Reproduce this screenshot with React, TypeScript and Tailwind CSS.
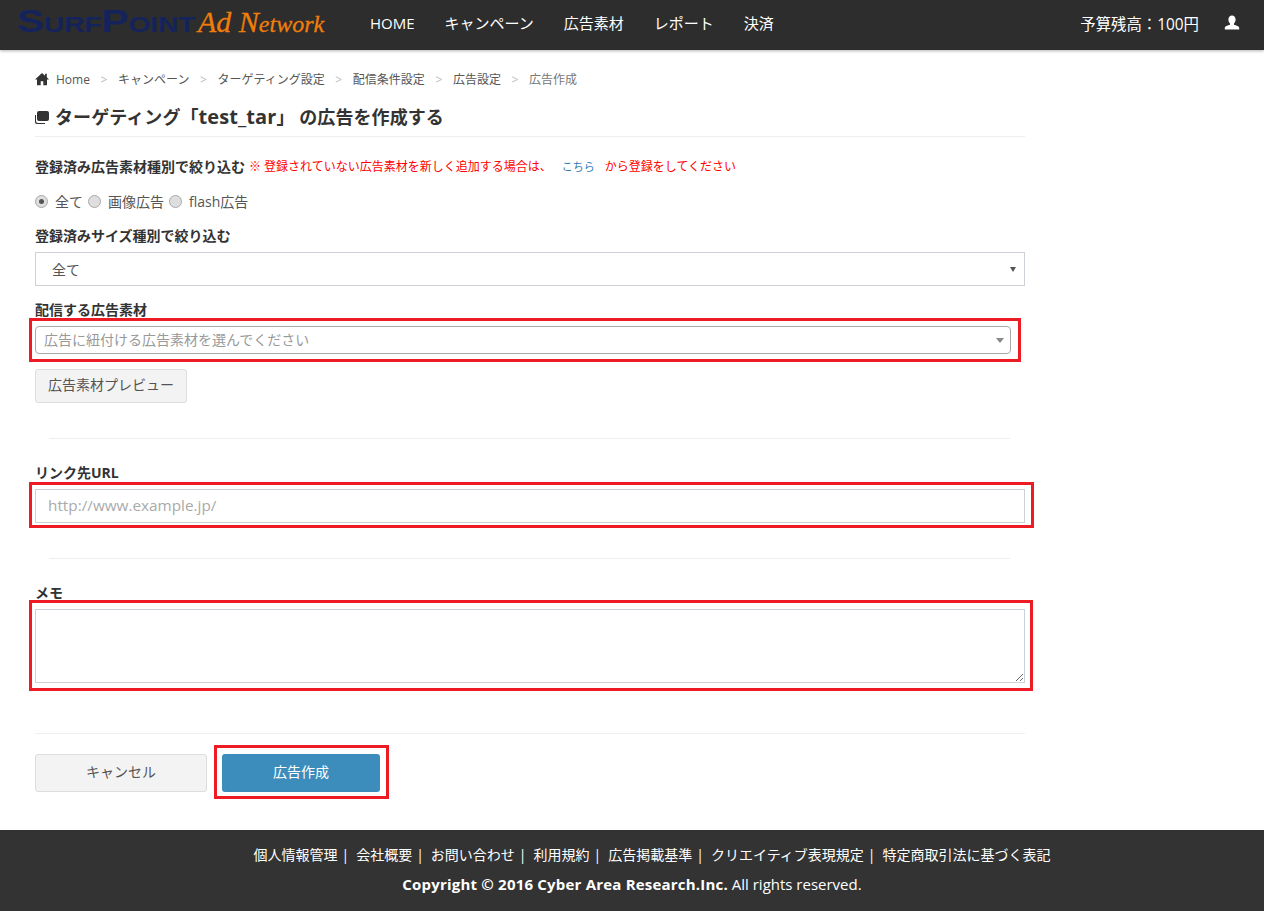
import { Fragment } from "react";

const navItems = ["HOME", "キャンペーン", "広告素材", "レポート", "決済"];
const crumbs = ["キャンペーン", "ターゲティング設定", "配信条件設定", "広告設定"];
const footerLinks = [
  "個人情報管理",
  "会社概要",
  "お問い合わせ",
  "利用規約",
  "広告掲載基準",
  "クリエイティブ表現規定",
];

function Radio({ checked, label }: { checked?: boolean; label: string }) {
  return (
    <label className="flex items-center">
      <span className="flex size-[13px] items-center justify-center rounded-full border border-[#a9a9a9] bg-[#dedede]">
        {checked && <span className="size-[5px] rounded-full bg-[#555]" />}
      </span>
      <span className="ml-[7px] mr-[5px] text-[14px] text-[#555]">{label}</span>
    </label>
  );
}

function Header() {
  return (
    <header className="flex h-[50px] items-center bg-[#2d2d2d] shadow-[0_1px_3px_rgba(0,0,0,0.3)]">
      <div className="ml-[17px] flex w-[353px] items-baseline whitespace-nowrap pb-[8px]">
        <span className="w-[181px] origin-left scale-x-[1.27] font-['Liberation_Sans',sans-serif] text-[32px] font-bold leading-none text-[#14235c] [font-variant:small-caps]">
          SurfPoint
        </span>
        <span className="font-['Liberation_Serif',serif] text-[30px] italic leading-none text-[#f07d0a] [-webkit-text-stroke:0.3px_#f07d0a]">
          Ad N<span className="text-[24px]">etwork</span>
        </span>
      </div>
      <nav className="flex gap-[30px] pb-1 text-[15px] text-white">
        {navItems.map((item) => (
          <a key={item}>{item}</a>
        ))}
      </nav>
      <div className="ml-auto flex items-center">
        <span className="text-[15.4px] text-white">予算残高：100円</span>
        <svg viewBox="0 0 16 16" className="mb-1 ml-[25px] mr-[24px] size-4 fill-white">
          <path d="M8 0.5c2.3 0 3.6 1.8 3.6 4 0 1.6-.7 3.2-1.6 4v1.3c1.8.6 5.2 1.4 5.2 3.2v1.5H.8V13c0-1.8 3.4-2.6 5.2-3.2V8.500C5.100 7.700 4.400 6.100 4.400 4.500c0-2.200 1.300-4 3.600-4z" />
        </svg>
      </div>
    </header>
  );
}

function Breadcrumb() {
  return (
    <div className="flex h-[20px] items-center text-[12px] text-[#555]">
      <svg viewBox="0 0 16 16" className="mb-[2px] mr-[7px] size-[14px] fill-[#333]">
        <path d="M8 1 0 8.500h2.300V15h4.200v-4.500h3V15h4.200V8.500H16l-2.500-2.400V2h-2v2.200z" />
      </svg>
      <span>Home</span>
      {crumbs.map((c) => (
        <Fragment key={c}>
          <span className="mx-[10.6px] text-[#bbb]">&gt;</span>
          <span>{c}</span>
        </Fragment>
      ))}
      <span className="mx-[10.6px] text-[#bbb]">&gt;</span>
      <span className="text-[#777]">広告作成</span>
    </div>
  );
}

function FieldLabel({ children }: { children: string }) {
  return <p className="text-[14px] font-bold leading-[18px] text-[#333]">{children}</p>;
}

export default function App() {
  return (
    <div className="min-h-[911px] bg-white font-['Open_Sans','Noto_Sans_CJK_JP',sans-serif] text-[#333]">
      <Header />
      <main className="ml-[35px] w-[990px] pt-5">
        <Breadcrumb />
        <h1 className="mt-[12px] flex h-[30px] items-center text-[18px] font-bold tracking-[0.08px] text-[#333]">
          <svg viewBox="0 0 14 14" className="mr-[6px] size-[14px] fill-[#333]">
            <path d="M4 1h8a2 2 0 0 1 2 2v6a2 2 0 0 1-2 2H4a2 2 0 0 1-2-2V3a2 2 0 0 1 2-2z" />
            <path d="M0 5h1v6a2 2 0 0 0 2 2h7v1H2a2 2 0 0 1-2-2z" />
          </svg>
          <span>
            ターゲティング「<span className="text-[20px]">test_tar</span>」 の広告を作成する
          </span>
        </h1>
        <hr className="mt-[4px] border-[#eee]" />

        <div className="mt-[19px] flex h-[20px] items-center">
          <span className="mr-[4px] text-[14px] font-bold text-[#333]">登録済み広告素材種別で絞り込む</span>
          <div className="mt-[2px] flex items-center text-[12px] text-[#f00]">
            <span>※ 登録されていない広告素材を新しく追加する場合は、</span>
            <a className="mx-[10px] text-[11px] text-[#337ab7]">こちら</a>
            <span>から登録をしてください</span>
          </div>
        </div>

        <div className="mt-[15px] flex h-[20px] items-center">
          <Radio checked label="全て" />
          <Radio label="画像広告" />
          <Radio label="flash広告" />
        </div>

        <div className="mt-[16px]">
          <FieldLabel>登録済みサイズ種別で絞り込む</FieldLabel>
        </div>
        <div className="mt-[7px] flex h-[34px] items-center justify-between border border-[#ccd0d7] pl-4 pr-[8px] text-[14px] text-[#555]">
          全て
          <span className="h-0 w-0 border-x-[3px] border-t-[5px] border-x-transparent border-t-[#555]" />
        </div>

        <div className="mt-[15px]">
          <FieldLabel>配信する広告素材</FieldLabel>
        </div>
        <div className="-ml-[6px] -mt-[1px] w-[992px] border-[3px] border-[#ed1c24] py-[5px] pl-[3px] pr-[7px]">
          <div className="flex h-[28px] items-center justify-between rounded-[4px] border border-[#aaa] pl-[8px] pr-[6px] text-[14px] text-[#999]">
            <span className="mb-[2px]">広告に紐付ける広告素材を選んでください</span>
            <span className="h-0 w-0 border-x-[4px] border-t-[5px] border-x-transparent border-t-[#888]" />
          </div>
        </div>
        <button className="mt-[7px] block h-[34px] w-[152px] rounded-[3px] border border-[#ddd] bg-[#f3f3f3] pb-[3px] text-[14px] text-[#555]">
          広告素材プレビュー
        </button>

        <hr className="ml-[14px] mt-[35px] w-[961px] border-[#eee]" />

        <div className="mt-[25px]">
          <FieldLabel>リンク先URL</FieldLabel>
        </div>
        <div className="-ml-[6px] w-[1005px] border-[3px] border-[#ed1c24] pb-[2px] pl-[3px] pr-[6px] pt-[4px]">
          <input
            readOnly
            placeholder="http://www.example.jp/"
            className="block h-[34px] w-full border border-[#ccd0d7] px-3 pb-[2px] text-[15.3px] outline-none placeholder:text-[#aaa]"
          />
        </div>

        <hr className="ml-[14px] mt-[30px] w-[961px] border-[#eee]" />

        <div className="mt-[25px]">
          <FieldLabel>メモ</FieldLabel>
        </div>
        <div className="-ml-[6px] -mt-[2px] w-[1004px] border-[3px] border-[#ed1c24] pb-[5px] pl-[3px] pr-[5px] pt-[6px]">
          <textarea readOnly className="block h-[74px] w-full border border-[#ccd0d7] outline-none" />
        </div>

        <hr className="mt-[42px] border-[#eee]" />

        <div className="mt-[11px] flex items-start">
          <button className="mt-[9px] h-[38px] w-[172px] rounded-[3px] border border-[#ddd] bg-[#f3f3f3] pb-[3px] text-[14px] text-[#555]">
            キャンセル
          </button>
          <div className="ml-[7px] border-[3px] border-[#ed1c24] pb-[4px] pl-[5px] pr-[6px] pt-[6px]">
            <button className="block h-[38px] w-[158px] rounded-[3px] bg-[#3c8dbc] pb-[3px] text-[14px] text-white">
              広告作成
            </button>
          </div>
        </div>
      </main>

      <footer className="mt-[31px] flex h-[81px] flex-col items-center bg-[#333] pt-[16px] text-white">
        <div className="ml-[40px] flex text-[14px] leading-[18px]">
          {footerLinks.map((link) => (
            <span key={link} className="mr-[7px]">
              {link}
              <span className="ml-[4px]">|</span>
            </span>
          ))}
          <span>特定商取引法に基づく表記</span>
        </div>
        <p className="mt-[11px] text-[15px] leading-[18px]">
          <span className="font-bold tracking-[0.2px]">Copyright © 2016 Cyber Area Research.Inc.</span> All rights reserved.
        </p>
      </footer>
    </div>
  );
}
